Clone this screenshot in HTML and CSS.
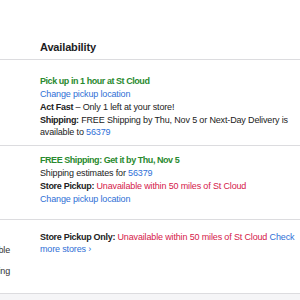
FILE: index.html
```html
<!DOCTYPE html>
<html lang="en">
<head>
    <meta charset="UTF-8">
    <meta name="viewport" content="width=device-width, initial-scale=1.0">
    <title>Availability</title>
    <link rel="stylesheet" href="styles.css">
</head>
<body>
    <div class="availability">
        <!-- Header -->
        <div class="avail-header">
            <div class="avail-label"></div>
            <h2 class="avail-title">Availability</h2>
        </div>

        <!-- Pickup row -->
        <div class="avail-row row-pickup">
            <div class="avail-label"></div>
            <div class="avail-info">
                <p class="green bold">Pick up in 1 hour at St Cloud</p>
                <p><a href="#" class="link">Change pickup location</a></p>
                <p><strong>Act Fast</strong> – Only 1 left at your store!</p>
                <p><strong>Shipping:</strong> FREE Shipping by Thu, Nov 5 or Next-Day Delivery is available to <a href="#" class="link">56379</a></p>
            </div>
        </div>

        <!-- Shipping row -->
        <div class="avail-row row-shipping">
            <div class="avail-label"></div>
            <div class="avail-info">
                <p class="green bold">FREE Shipping: Get it by Thu, Nov 5</p>
                <p>Shipping estimates for <a href="#" class="link">56379</a></p>
                <p><strong>Store Pickup:</strong> <span class="red">Unavailable within 50 miles of St Cloud</span></p>
                <p><a href="#" class="link">Change pickup location</a></p>
            </div>
        </div>

        <!-- Store only row -->
        <div class="avail-row row-store">
            <div class="avail-label">
                <p>Unavailable</p>
                <p>for Shipping</p>
            </div>
            <div class="avail-info">
                <p><strong>Store Pickup Only:</strong> <span class="red">Unavailable within 50 miles of St Cloud</span> <a href="#" class="link">Check more stores ›</a></p>
            </div>
        </div>

        <div class="avail-footer"></div>
    </div>
</body>
</html>
```

FILE: styles.css
```css
* {
    margin: 0;
    padding: 0;
    box-sizing: border-box;
}

body {
    font-family: "Liberation Sans", Arial, sans-serif;
    background-color: #fff;
    color: #222;
    font-size: 9px;
    line-height: 12px;
    letter-spacing: -0.15px;
    overflow: hidden;
}

.availability {
    margin-left: -70px;
    width: 370px;
}

.avail-header,
.avail-row {
    display: grid;
    grid-template-columns: 110px 1fr;
    border-bottom: 1px solid #dcdcdf;
}

.avail-header {
    padding-top: 40px;
    padding-bottom: 5px;
}

.avail-title {
    font-size: 11px;
    line-height: 14px;
    font-weight: bold;
    letter-spacing: -0.15px;
    color: #1d1d1f;
}

.avail-info {
    padding-right: 3px;
}

.avail-info p {
    margin-bottom: 1px;
}

.avail-label {
    text-align: right;
    padding-right: 30px;
    color: #333;
}

.avail-label p {
    margin-bottom: 9px;
}

.avail-label p:last-child {
    margin-bottom: 0;
}

.row-pickup {
    padding: 15px 0 6px;
}

.row-shipping {
    padding: 8px 0 13px;
}

.row-store {
    padding: 11px 0 0;
}

.row-store .avail-label {
    padding-top: 13px;
    padding-bottom: 16px;
}

.avail-footer {
    height: 20px;
    background: #f5f5f7;
}

.bold,
strong {
    font-weight: bold;
    letter-spacing: -0.45px;
}

strong {
    letter-spacing: -0.3px;
}

.green {
    color: #2a8a2f;
}

.red {
    color: #d5204a;
}

.link {
    color: #2f6fd6;
    text-decoration: none;
}
```
